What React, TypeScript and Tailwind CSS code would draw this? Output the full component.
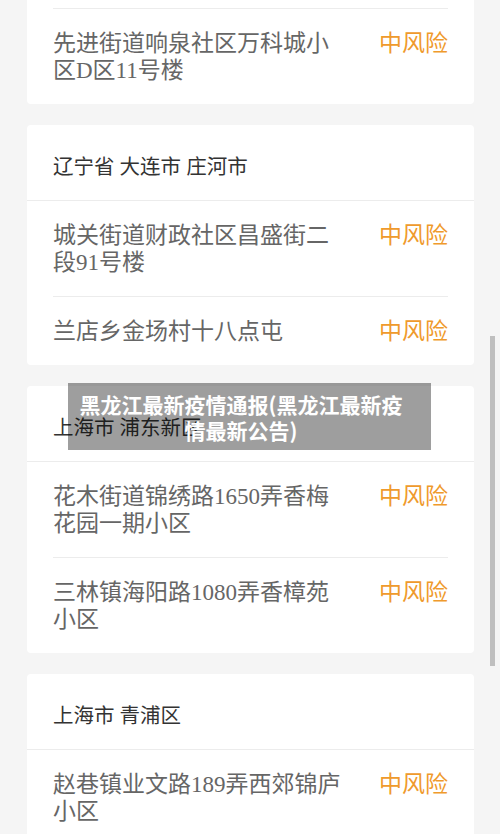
import React from "react"

type Spot = { name: string; level: string }
type Area = { region?: string; spots: Spot[]; cutTop?: boolean }

const areas: Area[] = [
  {
    cutTop: true,
    spots: [{ name: "先进街道响泉社区万科城小区D区11号楼", level: "中风险" }],
  },
  {
    region: "辽宁省 大连市 庄河市",
    spots: [
      { name: "城关街道财政社区昌盛街二段91号楼", level: "中风险" },
      { name: "兰店乡金场村十八点屯", level: "中风险" },
    ],
  },
  {
    region: "上海市 浦东新区",
    spots: [
      { name: "花木街道锦绣路1650弄香梅花园一期小区", level: "中风险" },
      { name: "三林镇海阳路1080弄香樟苑小区", level: "中风险" },
    ],
  },
  {
    region: "上海市 青浦区",
    spots: [{ name: "赵巷镇业文路189弄西郊锦庐小区", level: "中风险" }],
  },
]

const font = { fontFamily: '"Liberation Serif", "Noto Sans CJK SC", serif' }

function SpotRow({ spot, divider }: { spot: Spot; divider: boolean }) {
  return (
    <div className="px-[26px]">
      <div
        className={
          "flex items-start justify-between pt-[21px] pb-[20px] " +
          (divider ? "border-t border-[#ececec]" : "")
        }
      >
        <p className="w-[292px] text-[23px] leading-[27px] text-[#666]">{spot.name}</p>
        <span className="text-[23px] leading-[27px] text-[#ef9a2c]">{spot.level}</span>
      </div>
    </div>
  )
}

function AreaCard({ area }: { area: Area }) {
  return (
    <div className={"bg-white " + (area.cutTop ? "rounded-b-[4px] pt-[8px]" : "rounded-[4px]")}>
      {area.region && (
        <div className="h-[76px] border-b border-[#ececec] pl-[26px] pt-[29px]">
          <p className="text-[20.5px] leading-[27px] text-[#333]">{area.region}</p>
        </div>
      )}
      {area.spots.map((s, i) => (
        <SpotRow key={s.name} spot={s} divider={area.cutTop || i > 0} />
      ))}
    </div>
  )
}

export default function App() {
  return (
    <div className="relative h-[834px] overflow-hidden bg-[#f5f5f5]" style={font}>
      <div className="flex flex-col gap-[21px] pl-[27px] pr-[26px]">
        {areas.map((a, i) => (
          <AreaCard key={i} area={a} />
        ))}
      </div>

      {/* caption overlay */}
      <div
        className="absolute left-[68px] top-[383px] flex h-[67px] w-[363px] items-center bg-black/[0.38] pl-[10px] pr-[27px] text-center text-[21px] font-bold leading-[26px] text-white"
        style={{ fontFamily: '"Noto Sans CJK SC", sans-serif' }}
      >
        黑龙江最新疫情通报(黑龙江最新疫情最新公告)
      </div>

      {/* scrollbar thumb */}
      <div className="absolute left-[490px] top-[336px] h-[330px] w-[5px] bg-[#bfbfbf]" />
    </div>
  )
}
